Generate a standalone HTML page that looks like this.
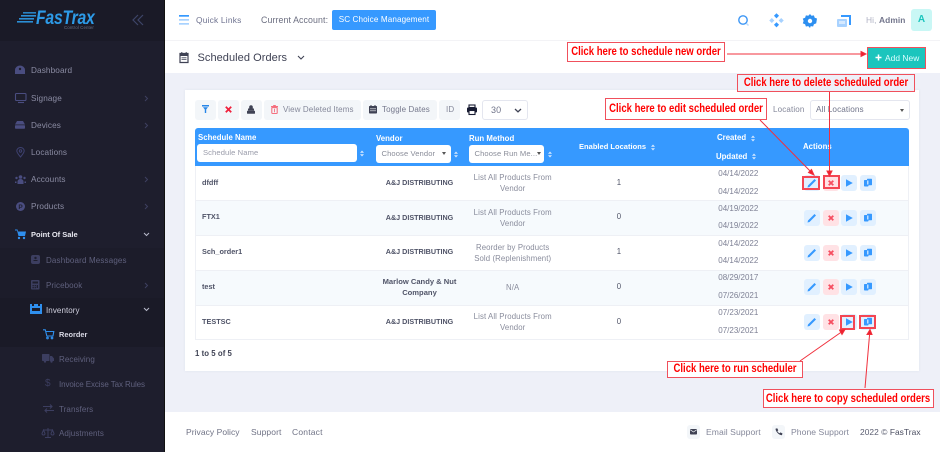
<!DOCTYPE html>
<html><head><meta charset="utf-8">
<style>
html,body{margin:0;padding:0}
body{width:940px;height:452px;overflow:hidden;position:relative;background:#fff;font-family:"Liberation Sans",sans-serif;}
#w{position:absolute;left:0;top:0;width:940px;height:452px;overflow:hidden;filter:blur(.3px)}
.a,.t,.c{position:absolute}
.t{white-space:nowrap;line-height:12px;font-size:8.6px;letter-spacing:.15px}
.c{white-space:nowrap;line-height:12px;font-size:7.8px;text-align:center;letter-spacing:.1px}
.s{color:#8b8ca3;font-size:8.2px;letter-spacing:.12px}
.u{color:#5f607d;font-size:8px;letter-spacing:.08px}
.h{color:#fff;font-weight:bold;font-size:7.8px;letter-spacing:.02px}
.n{color:#505468;font-weight:bold;font-size:7.3px;letter-spacing:0}
.v{color:#505468;font-weight:bold;font-size:7.2px;letter-spacing:0}
.m{color:#898c9c;white-space:normal;line-height:11px}
.d{color:#7e8195;font-size:8px;letter-spacing:0}
.g{color:#505468}
.f{color:#6f7285;font-size:8.5px;letter-spacing:.1px}
.b{color:#85889a;font-size:8px;letter-spacing:.1px}
.tb{position:absolute;top:100px;height:19.5px;background:#f3f6f9;border-radius:3px}
.ab{position:absolute;width:16px;height:16px;border-radius:3px;background:#e1f0ff}
.ab.r{background:#ffe2e5}
.rl{position:absolute;border:2px solid #f44653;box-sizing:border-box;background:transparent}
.cal{position:absolute;border:1.5px solid #f0505c;background:#fff;box-sizing:border-box;color:#f00;font-weight:bold;font-size:12px}
.cal span{position:absolute;left:50%;top:0;white-space:nowrap;transform:translateX(-50%) scaleX(.795)}
svg{position:absolute;overflow:visible}
.inp{position:absolute;background:#fff;border-radius:3px;height:17.5px;color:#8a8d99;font-size:7.6px;line-height:17.5px;padding-left:5.5px;box-sizing:border-box;white-space:nowrap;overflow:hidden;letter-spacing:.1px}
.ar{position:absolute;width:0;height:0;border-left:2.5px solid transparent;border-right:2.5px solid transparent;border-top:3px solid #555}
</style></head><body><div id="w">

<!-- sidebar -->
<div class="a" style="left:0;top:0;width:164px;height:452px;background:#1e1e2d"></div>
<div class="a" style="left:0;top:0;width:164px;height:41px;background:#1a1a27"></div>
<div class="a" style="left:164px;top:0;width:1px;height:452px;background:#111"></div>
<div class="a" style="left:0;top:248px;width:164px;height:50px;background:#1c1c2a"></div>
<div class="a" style="left:0;top:298px;width:164px;height:49px;background:#1a1a27"></div>

<!-- logo -->
<svg style="left:17px;top:12px" width="20" height="12"><g fill="#2b8fd6"><rect x="6" y="0" width="13" height="1.6" opacity=".9"/><rect x="4" y="3" width="15" height="1.6"/><rect x="2" y="6" width="15" height="1.6"/><rect x="0" y="9" width="16" height="1.6"/></g></svg>
<div class="t" style="left:36px;top:8px;color:#2d9be8;font-weight:bold;font-style:italic;font-size:19.5px;line-height:20px;letter-spacing:-.3px;transform:scaleX(.81);transform-origin:0 0">FasTrax</div>
<div class="t" style="left:64px;top:25px;color:#6a6f80;font-size:4.4px;line-height:6px;letter-spacing:.1px">Control Center</div>
<svg style="left:132px;top:14px" width="12" height="12" fill="none" stroke="#3e4568" stroke-width="1.2"><path d="M6 1 L1 6 L6 11M11 1 L6 6 L11 11"/></svg>

<div class="t s" style="left:31px;top:65px">Dashboard</div>
<div class="t s" style="left:31px;top:93px">Signage</div>
<div class="t s" style="left:31px;top:120px">Devices</div>
<div class="t s" style="left:31px;top:147px">Locations</div>
<div class="t s" style="left:31px;top:174px">Accounts</div>
<div class="t s" style="left:31px;top:201px">Products</div>
<div class="t" style="left:31px;top:228.500px;color:#e8e8f0;font-weight:bold;font-size:7.5px;letter-spacing:0">Point Of Sale</div>
<div class="t u" style="left:46px;top:255px;letter-spacing:.16px">Dashboard Messages</div>
<div class="t u" style="left:46px;top:280px">Pricebook</div>
<div class="t" style="left:46px;top:305px;color:#d0d0de;font-size:8px;letter-spacing:.08px">Inventory</div>
<div class="t" style="left:59px;top:329px;color:#d8d8e4;font-weight:bold;font-size:7.4px;letter-spacing:0">Reorder</div>
<div class="t u" style="left:59px;top:354px">Receiving</div>
<div class="t u" style="left:59px;top:379px;letter-spacing:-.1px">Invoice Excise Tax Rules</div>
<div class="t u" style="left:59px;top:404px">Transfers</div>
<div class="t u" style="left:59px;top:428px">Adjustments</div>

<!-- sidebar icons -->
<svg style="left:15px;top:65px" width="11" height="10"><path d="M0 9V5a5 4.5 0 0 1 10 0v4z" fill="#4a4d80"/><circle cx="5" cy="4" r="1.2" fill="#1e1e2d"/></svg>
<svg style="left:15px;top:93px" width="12" height="10" fill="none" stroke="#4a4d80" stroke-width="1.1"><rect x=".5" y=".5" width="10.5" height="7" rx="1"/><path d="M3 9.5h6"/></svg>
<svg style="left:15px;top:121px" width="11" height="8"><path d="M2 0h6l2 3.500H0z" fill="#4a4d80"/><rect y="4.200" width="10" height="3.500" rx=".7" fill="#4a4d80"/></svg>
<svg style="left:16px;top:147px" width="9" height="11" fill="none" stroke="#3e4170" stroke-width="1"><path d="M4.500 10C2 7 .8 5.500 .8 4a3.700 3.500 0 0 1 7.400 0c0 1.500-1.200 3-3.700 6z"/><circle cx="4.500" cy="4" r="1.200"/></svg>
<svg style="left:15px;top:175px" width="11" height="9" fill="#4a4d80"><circle cx="5.500" cy="2" r="1.800"/><circle cx="1.500" cy="3" r="1.200"/><circle cx="9.500" cy="3" r="1.200"/><path d="M2.500 9V6.500a3 2.500 0 0 1 6 0V9zM0 6.500h1.500V8H0zM9.500 6.500H11V8H9.500z"/></svg>
<svg style="left:16px;top:202px" width="9" height="9"><circle cx="4.500" cy="4.500" r="4.500" fill="#4a4d80"/><text x="4.500" y="7" font-size="6.500" font-weight="bold" text-anchor="middle" fill="#1e1e2d" font-family="Liberation Sans">P</text></svg>
<svg style="left:15px;top:229px" width="11" height="11"><path d="M0 .5h2.500l.5 2h8L10 7H3.500L2 1.500H0z" fill="#2f8fee"/><circle cx="4" cy="9" r="1.200" fill="#2f8fee"/><circle cx="9" cy="9" r="1.200" fill="#2f8fee"/></svg>
<svg style="left:31px;top:255px" width="9" height="9"><rect width="9" height="9" rx="2" fill="#3c3e60"/><path d="M2.500 5.500h4" stroke="#1e1e2d" stroke-width="1"/><circle cx="4.500" cy="3" r="1.200" fill="#1e1e2d"/></svg>
<svg style="left:31px;top:280px" width="9" height="10" fill="#3c3e60"><rect width="8.500" height="9.500" rx="1"/><g fill="#1e1e2d"><rect x="1.500" y="1.500" width="5.500" height="2"/><rect x="1.500" y="5" width="1.300" height="1.300"/><rect x="3.600" y="5" width="1.300" height="1.300"/><rect x="5.700" y="5" width="1.300" height="3"/><rect x="1.500" y="7" width="1.300" height="1.300"/><rect x="3.600" y="7" width="1.300" height="1.300"/></g></svg>
<svg style="left:30px;top:304px" width="12" height="10"><path d="M0 0h2v2h2V0h4v2h2V0h2v10H0z" fill="#2f8fee"/><rect x="2" y="4" width="8" height="3" fill="#1a1a27"/></svg>
<svg style="left:43px;top:329px" width="11" height="11" fill="none" stroke="#2f8fee" stroke-width="1.100"><path d="M0 .8h2.300l1.500 6.200H10L10.800 2.500H3"/><circle cx="4.500" cy="9" r=".8"/><circle cx="9" cy="9" r=".8"/></svg>
<svg style="left:42px;top:354px" width="12" height="9" fill="#3c3e60"><rect width="7.500" height="7" rx=".7"/><path d="M8 2h2l2 2.500V7H8z"/><circle cx="3" cy="7.500" r="1.200"/><circle cx="9.500" cy="7.500" r="1.200"/></svg>
<div class="t" style="left:45px;top:378px;color:#3c3e60;font-size:10px">$</div>
<svg style="left:43px;top:404px" width="11" height="9" fill="none" stroke="#3c3e60" stroke-width="1.100"><path d="M0 2.500h9M7 .5l2 2-2 2M11 6.500H2M4 4.500l-2 2 2 2"/></svg>
<svg style="left:42px;top:428px" width="12" height="10" fill="none" stroke="#3c3e60" stroke-width="1"><path d="M6 0v9M3 9.500h6M1 2h10M0 5.500l1.500-3.500L3 5.500a1.500 1.500 0 0 1-3 0zM9 5.500L10.500 2 12 5.500a1.500 1.500 0 0 1-3 0z"/></svg>

<!-- chevrons -->
<svg style="left:144px;top:95px" width="5" height="7" fill="none" stroke="#3e4060" stroke-width="1"><path d="M1 1l2.500 2.500L1 6"/></svg>
<svg style="left:144px;top:122px" width="5" height="7" fill="none" stroke="#3e4060" stroke-width="1"><path d="M1 1l2.500 2.500L1 6"/></svg>
<svg style="left:144px;top:176px" width="5" height="7" fill="none" stroke="#3e4060" stroke-width="1"><path d="M1 1l2.500 2.500L1 6"/></svg>
<svg style="left:144px;top:203px" width="5" height="7" fill="none" stroke="#3e4060" stroke-width="1"><path d="M1 1l2.500 2.500L1 6"/></svg>
<svg style="left:144px;top:282px" width="5" height="7" fill="none" stroke="#3e4060" stroke-width="1"><path d="M1 1l2.500 2.500L1 6"/></svg>
<svg style="left:143px;top:232px" width="7" height="5" fill="none" stroke="#b8bacb" stroke-width="1"><path d="M1 1l2.500 2.500L6 1"/></svg>
<svg style="left:143px;top:307px" width="7" height="5" fill="none" stroke="#b8bacb" stroke-width="1"><path d="M1 1l2.500 2.500L6 1"/></svg>

<!-- main bg -->
<div class="a" style="left:165px;top:40px;width:775px;height:1px;background:#f3f3f6"></div>
<div class="a" style="left:165px;top:73px;width:775px;height:339px;background:#eef0f8"></div>

<!-- top bar -->
<svg style="left:179px;top:15px" width="11" height="10"><rect width="10" height="1.700" fill="#3699ff"/><rect y="4" width="10" height="1.700" fill="#a8d2ff"/><rect y="8" width="10" height="1.700" fill="#a8d2ff"/></svg>
<div class="t" style="left:196px;top:13.500px;color:#6f7390;font-size:8.400px;letter-spacing:.2px">Quick Links</div>
<div class="t" style="left:261px;top:13.500px;color:#6b6e80;font-size:8.800px;letter-spacing:.1px">Current Account:</div>
<div class="a" style="left:332px;top:10px;width:104px;height:20px;background:#3699ff;border-radius:2px"></div>
<div class="c" style="left:332px;top:13.500px;width:104px;color:#fff;font-size:8.100px;letter-spacing:.12px">SC Choice Management</div>

<svg style="left:738px;top:15px" width="12" height="12" fill="none" stroke="#3c96f5" stroke-width="1.400"><circle cx="5" cy="5" r="4.200"/><path d="M8.500 8.500l2 2" stroke="#bcdcfc"/></svg>
<svg style="left:770px;top:14px" width="13" height="13"><rect x="4.700" y="0" width="3.600" height="3.600" transform="rotate(45 6.500 1.800)" fill="#3699ff"/><rect x="4.700" y="9" width="3.600" height="3.600" transform="rotate(45 6.500 10.800)" fill="#3699ff"/><rect x="0" y="4.700" width="3.600" height="3.600" transform="rotate(45 1.800 6.500)" fill="#a8d2ff"/><rect x="9.400" y="4.700" width="3.600" height="3.600" transform="rotate(45 11.200 6.500)" fill="#a8d2ff"/></svg>
<svg style="left:803px;top:13.500px" width="14" height="14"><path d="M7 0l1.500 1.800 2.400-.4.800 2.300 2.300.8-.4 2.500-.4 2.400-2.300.8-.8 2.300-2.400-.4L7 14l-1.700-1.900-2.400.4-.8-2.300L-.2 9.400.6 7-.2 4.600l2.300-.9.800-2.300 2.400.4z" fill="#2d8ff0"/><circle cx="7" cy="7" r="2.200" fill="#fff"/></svg>
<svg style="left:837px;top:14.500px" width="15" height="12"><path d="M4 0h10v10h-2V2H4z" fill="#3699ff"/><rect x="0" y="4" width="10" height="8" rx="1" fill="#a8d2ff"/><rect x="2" y="6" width="6" height="3" fill="#d5e9ff"/></svg>
<div class="t" style="left:866px;top:13.500px;font-size:8.400px;letter-spacing:.1px;color:#b0b3c4">Hi, <b style="color:#73768c">Admin</b></div>
<div class="a" style="left:910.500px;top:9px;width:21.500px;height:22px;background:#c9f7f5;border-radius:3px"></div>
<div class="c" style="left:911px;top:14px;width:21px;color:#1bc5bd;font-size:10px;font-weight:bold">A</div>

<!-- sub header -->
<svg style="left:179px;top:52px" width="10" height="11"><path d="M1 1.500h8v9H1z" fill="none" stroke="#3f4254" stroke-width="1.200"/><rect x="1" y="1.500" width="8" height="2.500" fill="#3f4254"/><rect x="2.300" y="0" width="1" height="2.500" fill="#3f4254"/><rect x="6.700" y="0" width="1" height="2.500" fill="#3f4254"/><path d="M2.500 5.800h5M2.500 7.500h5" stroke="#3f4254" stroke-width=".8"/></svg>
<div class="t" style="left:197.500px;top:51.500px;color:#3f4254;font-size:11px;letter-spacing:.06px">Scheduled Orders</div>
<svg style="left:297px;top:55px" width="9" height="6" fill="none" stroke="#3f4254" stroke-width="1.100"><path d="M1 1l3 3 3-3"/></svg>
<div class="a" style="left:868px;top:47.500px;width:57px;height:20px;background:#1bc5bd;outline:1.500px solid #f0505c"></div>
<svg style="left:875px;top:54px" width="7" height="7"><path d="M3.500 .5v6M.5 3.500h6" stroke="#fff" stroke-width="1.500"/></svg>
<div class="t" style="left:885px;top:51.500px;color:#dff;font-size:8.400px;letter-spacing:.05px">Add New</div>

<!-- card -->
<div class="a" style="left:185px;top:90px;width:734px;height:281px;background:#fff;box-shadow:0 0 3px rgba(80,90,130,.08)"></div>

<!-- toolbar -->
<div class="tb" style="left:195px;width:21px"></div>
<div class="tb" style="left:218px;width:21px"></div>
<div class="tb" style="left:241px;width:21px"></div>
<div class="tb" style="left:264px;width:97px"></div>
<div class="tb" style="left:363px;width:74px"></div>
<div class="tb" style="left:439px;width:21px"></div>
<svg style="left:202px;top:105px" width="7" height="8"><path d="M0 0h7v1.500H0zM1 2.300h5L4.200 4.500V8H2.800V4.500z" fill="#2786e8"/></svg>
<svg style="left:225px;top:106px" width="7" height="7"><path d="M.8 .8l5.400 5.400M6.200 .8L.8 6.200" stroke="#f0213c" stroke-width="1.800"/></svg>
<svg style="left:247px;top:105px" width="8" height="9"><path d="M2.200 3.500V2a1.800 1.800 0 0 1 3.600 0v1.500z" fill="#3f4254"/><rect x="1" y="3.500" width="6" height="2.200" fill="#3f4254"/><rect y="5.700" width="8" height="3" rx=".5" fill="#3f4254"/></svg>
<svg style="left:271px;top:105px" width="7" height="9"><rect x="0" y="1" width="7" height="1.200" fill="#f5707f"/><rect x="2.200" y="0" width="2.600" height="1" fill="#f5707f"/><rect x=".8" y="2.600" width="5.400" height="5.900" rx=".7" fill="none" stroke="#f5707f" stroke-width="1.100"/><path d="M3.500 3.800v3.500" stroke="#f5707f" stroke-width=".9"/></svg>
<div class="t b" style="left:283px;top:104px">View Deleted Items</div>
<svg style="left:369px;top:105px" width="8" height="9"><rect y="1" width="8" height="7.500" rx=".7" fill="#3f4254"/><rect x="1.500" y="0" width="1" height="2" fill="#3f4254"/><rect x="5.500" y="0" width="1" height="2" fill="#3f4254"/><path d="M1 3.800h6M1 5.800h6" stroke="#f3f6f9" stroke-width=".7"/></svg>
<div class="t b" style="left:382px;top:104px;color:#75788c">Toggle Dates</div>
<div class="t b" style="left:446px;top:104px">ID</div>
<svg style="left:467px;top:104.500px" width="10" height="10"><rect x="2" y="0" width="6" height="2.500" fill="none" stroke="#181c32" stroke-width="1.100"/><rect y="2.500" width="10" height="5" rx="1" fill="#181c32"/><rect x="2" y="5.500" width="6" height="4" fill="#fff" stroke="#181c32" stroke-width="1.100"/></svg>
<div class="a" style="left:482px;top:100px;width:46px;height:20px;border:1px solid #e4e6ef;border-radius:3px;box-sizing:border-box;background:#fff"></div>
<div class="t" style="left:491px;top:103.500px;color:#70748a;font-size:9px">30</div>
<svg style="left:514px;top:107.500px" width="9" height="6" fill="none" stroke="#3f4254" stroke-width="1.300"><path d="M1 1l3 2.800L7 1"/></svg>
<div class="t b" style="left:773px;top:104px;letter-spacing:.15px">Location</div>
<div class="a" style="left:810px;top:100px;width:100px;height:20px;border:1px solid #e4e6ef;border-radius:3px;box-sizing:border-box;background:#fff"></div>
<div class="t" style="left:816px;top:104px;color:#70748a;font-size:8.200px;letter-spacing:.1px">All Locations</div>
<div class="ar" style="left:900px;top:109px"></div>

<!-- table head -->
<div class="a" style="left:195px;top:128px;width:714px;height:38px;background:#3699ff;border-radius:3px 3px 0 0"></div>
<div class="t h" style="left:198px;top:132px">Schedule Name</div>
<div class="inp" style="left:197px;top:144px;width:160px;height:18px;line-height:18px;padding-left:6px;color:#9a9caa">Schedule Name</div>
<div class="t h" style="left:376px;top:132.500px">Vendor</div>
<div class="inp" style="left:376px;top:145px;width:75px">Choose Vendor</div>
<div class="ar" style="left:442px;top:152px"></div>
<div class="t h" style="left:469px;top:132.500px">Run Method</div>
<div class="inp" style="left:469px;top:145px;width:75px">Choose Run Me...</div>
<div class="ar" style="left:537px;top:152px"></div>
<div class="t h" style="left:579px;top:141px;font-size:7.500px">Enabled Locations</div>
<div class="t h" style="left:717px;top:132px">Created</div>
<div class="t h" style="left:716px;top:150.500px">Updated</div>
<div class="t h" style="left:803px;top:141px">Actions</div>

<!-- sort carets -->
<svg width="0" height="0" style="left:0;top:0"><defs><g id="srt"><path d="M0 2.800L2 .5 4 2.800z" fill="#d6e9ff"/><path d="M0 4.200L2 6.500 4 4.200z" fill="#d6e9ff"/></g></defs></svg>
<svg style="left:360px;top:150px" width="4" height="7"><use href="#srt"/></svg>
<svg style="left:454px;top:150.500px" width="4" height="7"><use href="#srt"/></svg>
<svg style="left:548px;top:150.500px" width="4" height="7"><use href="#srt"/></svg>
<svg style="left:651px;top:143.500px" width="4" height="7"><use href="#srt"/></svg>
<svg style="left:751px;top:134.500px" width="4" height="7"><use href="#srt"/></svg>
<svg style="left:752px;top:153px" width="4" height="7"><use href="#srt"/></svg>

<!-- table rows -->
<div class="a" style="left:195px;top:166px;width:714px;height:174px;border:1px solid #eef0f5;border-top:0;box-sizing:border-box"></div>
<div class="a" style="left:196px;top:201px;width:712px;height:34px;background:#f6fafd"></div>
<div class="a" style="left:196px;top:271px;width:712px;height:34px;background:#f6fafd"></div>
<div class="a" style="left:196px;top:200px;width:712px;height:1px;background:#eef0f5"></div>
<div class="a" style="left:196px;top:235px;width:712px;height:1px;background:#eef0f5"></div>
<div class="a" style="left:196px;top:270px;width:712px;height:1px;background:#eef0f5"></div>
<div class="a" style="left:196px;top:304.500px;width:712px;height:1px;background:#eef0f5"></div>

<div class="t n" style="left:202px;top:176.500px">dfdff</div>
<div class="t n" style="left:202px;top:210.500px">FTX1</div>
<div class="t n" style="left:202px;top:245.500px">Sch_order1</div>
<div class="t n" style="left:202px;top:280.500px">test</div>
<div class="t n" style="left:202px;top:315.500px">TESTSC</div>

<div class="c v" style="left:374.500px;top:177px;width:90px">A&amp;J DISTRIBUTING</div>
<div class="c v" style="left:374.500px;top:212px;width:90px">A&amp;J DISTRIBUTING</div>
<div class="c v" style="left:374.500px;top:246px;width:90px">A&amp;J DISTRIBUTING</div>
<div class="c v" style="left:374.500px;top:276px;width:90px;font-size:7.600px;line-height:11px;white-space:normal">Marlow Candy &amp; Nut<br>Company</div>
<div class="c v" style="left:374.500px;top:315.500px;width:90px">A&amp;J DISTRIBUTING</div>

<div class="c m" style="left:462.700px;top:171.500px;width:100px">List All Products From<br>Vendor</div>
<div class="c m" style="left:462.700px;top:206.500px;width:100px">List All Products From<br>Vendor</div>
<div class="c m" style="left:462.700px;top:241.500px;width:100px">Reorder by Products<br>Sold (Replenishment)</div>
<div class="c m" style="left:462.700px;top:281.500px;width:100px">N/A</div>
<div class="c m" style="left:462.700px;top:310.500px;width:100px">List All Products From<br>Vendor</div>

<div class="c g" style="left:599.500px;top:176.500px;width:39px">1</div>
<div class="c g" style="left:599.500px;top:211px;width:39px">0</div>
<div class="c g" style="left:599.500px;top:246px;width:39px">1</div>
<div class="c g" style="left:599.500px;top:281px;width:39px">0</div>
<div class="c g" style="left:599.500px;top:315.500px;width:39px">0</div>

<div class="c d" style="left:712.300px;top:168px;width:52px">04/14/2022</div>
<div class="c d" style="left:712.300px;top:185.500px;width:52px">04/14/2022</div>
<div class="c d" style="left:712.300px;top:202.500px;width:52px">04/19/2022</div>
<div class="c d" style="left:712.300px;top:220px;width:52px">04/19/2022</div>
<div class="c d" style="left:712.300px;top:237.500px;width:52px">04/14/2022</div>
<div class="c d" style="left:712.300px;top:255px;width:52px">04/14/2022</div>
<div class="c d" style="left:712.300px;top:272px;width:52px">08/29/2017</div>
<div class="c d" style="left:712.300px;top:289.500px;width:52px">07/26/2021</div>
<div class="c d" style="left:712.300px;top:307px;width:52px">07/23/2021</div>
<div class="c d" style="left:712.300px;top:324.500px;width:52px">07/23/2021</div>

<!-- action icon defs -->
<svg width="0" height="0" style="left:0;top:0"><defs>
<g id="pen"><path d="M3.500 12.500l.5-2 6.500-6.500 1.500 1.500-6.500 6.500z" fill="#3699ff"/></g>
<g id="del"><path d="M5.700 5.700l4.600 4.600M10.300 5.700l-4.600 4.600" stroke="#f64e60" stroke-width="1.800"/></g>
<g id="run"><path d="M5 4.300l6.800 3.700L5 11.700z" fill="#3699ff"/></g>
<g id="cop"><rect x="4" y="5" width="4.500" height="6.500" rx=".7" fill="#3699ff"/><rect x="7" y="3.800" width="5" height="6.500" rx=".7" fill="#3699ff"/><path d="M7 5.500h1.500v4H7z" fill="#e1f0ff" opacity=".8"/></g>
</defs></svg>

<div class="ab" style="left:804px;top:175px"></div><div class="ab r" style="left:822.500px;top:175px"></div><div class="ab" style="left:841px;top:175px"></div><div class="ab" style="left:859.500px;top:175px"></div>
<svg style="left:804px;top:175px" width="16" height="16"><use href="#pen"/></svg><svg style="left:822.500px;top:175px" width="16" height="16"><use href="#del"/></svg><svg style="left:841px;top:175px" width="16" height="16"><use href="#run"/></svg><svg style="left:859.500px;top:175px" width="16" height="16"><use href="#cop"/></svg>

<div class="ab" style="left:804px;top:209.500px"></div><div class="ab r" style="left:822.500px;top:209.500px"></div><div class="ab" style="left:841px;top:209.500px"></div><div class="ab" style="left:859.500px;top:209.500px"></div>
<svg style="left:804px;top:209.500px" width="16" height="16"><use href="#pen"/></svg><svg style="left:822.500px;top:209.500px" width="16" height="16"><use href="#del"/></svg><svg style="left:841px;top:209.500px" width="16" height="16"><use href="#run"/></svg><svg style="left:859.500px;top:209.500px" width="16" height="16"><use href="#cop"/></svg>

<div class="ab" style="left:804px;top:244.500px"></div><div class="ab r" style="left:822.500px;top:244.500px"></div><div class="ab" style="left:841px;top:244.500px"></div><div class="ab" style="left:859.500px;top:244.500px"></div>
<svg style="left:804px;top:244.500px" width="16" height="16"><use href="#pen"/></svg><svg style="left:822.500px;top:244.500px" width="16" height="16"><use href="#del"/></svg><svg style="left:841px;top:244.500px" width="16" height="16"><use href="#run"/></svg><svg style="left:859.500px;top:244.500px" width="16" height="16"><use href="#cop"/></svg>

<div class="ab" style="left:804px;top:279px"></div><div class="ab r" style="left:822.500px;top:279px"></div><div class="ab" style="left:841px;top:279px"></div><div class="ab" style="left:859.500px;top:279px"></div>
<svg style="left:804px;top:279px" width="16" height="16"><use href="#pen"/></svg><svg style="left:822.500px;top:279px" width="16" height="16"><use href="#del"/></svg><svg style="left:841px;top:279px" width="16" height="16"><use href="#run"/></svg><svg style="left:859.500px;top:279px" width="16" height="16"><use href="#cop"/></svg>

<div class="ab" style="left:804px;top:314px"></div><div class="ab r" style="left:822.500px;top:314px"></div><div class="ab" style="left:841px;top:314px"></div><div class="ab" style="left:859.500px;top:314px"></div>
<svg style="left:804px;top:314px" width="16" height="16"><use href="#pen"/></svg><svg style="left:822.500px;top:314px" width="16" height="16"><use href="#del"/></svg><svg style="left:841px;top:314px" width="16" height="16"><use href="#run"/></svg><svg style="left:859.500px;top:314px" width="16" height="16"><use href="#cop"/></svg>

<div class="t" style="left:195px;top:348px;color:#3f4254;font-weight:bold;font-size:7.800px;letter-spacing:.05px">1 to 5 of 5</div>

<!-- footer -->
<div class="t f" style="left:186px;top:425.500px;letter-spacing:.05px">Privacy Policy</div>
<div class="t f" style="left:251px;top:425.500px">Support</div>
<div class="t f" style="left:292px;top:425.500px;letter-spacing:.2px">Contact</div>
<div class="a" style="left:687px;top:425px;width:13px;height:14px;background:#f3f6f9;border-radius:3px"></div>
<svg style="left:690px;top:429px" width="8" height="6"><rect width="7" height="5.500" rx=".7" fill="#3f4254"/><path d="M.3 .8l3.200 2.200L6.700 .8" stroke="#f3f6f9" stroke-width=".7" fill="none"/></svg>
<div class="t" style="left:706px;top:425.500px;color:#85889a;font-size:8.600px;letter-spacing:.05px">Email Support</div>
<div class="a" style="left:772px;top:425px;width:13px;height:14px;background:#f3f6f9;border-radius:3px"></div>
<svg style="left:775px;top:428px" width="8" height="8"><path d="M.5 .8l1.700-.6 1.100 2-.9.9c.4 1 1.200 1.700 2.200 2.200l.9-.9 2 1.100-.6 1.700C4 7.200.8 4 .5 .8z" fill="#3f4254"/></svg>
<div class="t" style="left:791px;top:425.500px;color:#85889a;font-size:8.600px;letter-spacing:.05px">Phone Support</div>
<div class="t" style="left:860px;top:425.500px;color:#5a5d70;font-size:8.400px;letter-spacing:.05px">2022 © <span style="color:#4a4d60">FasTrax</span></div>

<!-- red highlight boxes -->
<div class="rl" style="left:802px;top:175.500px;width:17.500px;height:14px"></div>
<div class="rl" style="left:823px;top:175px;width:17px;height:14px"></div>
<div class="rl" style="left:840px;top:314.500px;width:15px;height:15.500px"></div>
<div class="rl" style="left:859px;top:315px;width:17px;height:14px"></div>

<!-- arrows -->
<svg style="left:0;top:0" width="940" height="452" fill="none" stroke="#f0303c" stroke-width="1">
<path d="M727 54H866"/><path d="M861 51.500l5 2.500-5 2.500z" fill="#ee2030"/>
<path d="M829.500 92V176"/><path d="M827 171l2.500 5 2.500-5z" fill="#ee2030"/>
<path d="M760 120L814 175"/><path d="M808.500 172.500l5.500 2.500-2.500-5.500z" fill="#ee2030"/>
<path d="M800 361L845 329.500"/><path d="M839.500 330l5.500-.5-3 5z" fill="#ee2030"/>
<path d="M865 388L870 329.500"/><path d="M867 334.500l3-5 2 5z" fill="#ee2030"/>
</svg>

<!-- callouts -->
<div class="cal" style="left:567px;top:42px;width:158px;height:20px;line-height:17px"><span>Click here to schedule new order</span></div>
<div class="cal" style="left:737px;top:74px;width:178px;height:18px;line-height:15px;background:#eef0f8"><span>Click here to delete scheduled order</span></div>
<div class="cal" style="left:605px;top:98px;width:162px;height:22px;line-height:19px"><span>Click here to edit scheduled order</span></div>
<div class="cal" style="left:667px;top:361px;width:136px;height:16.500px;line-height:13.500px"><span>Click here to run scheduler</span></div>
<div class="cal" style="left:763px;top:389px;width:170.500px;height:19px;line-height:16px"><span>Click here to copy scheduled orders</span></div>

</div></body></html>
